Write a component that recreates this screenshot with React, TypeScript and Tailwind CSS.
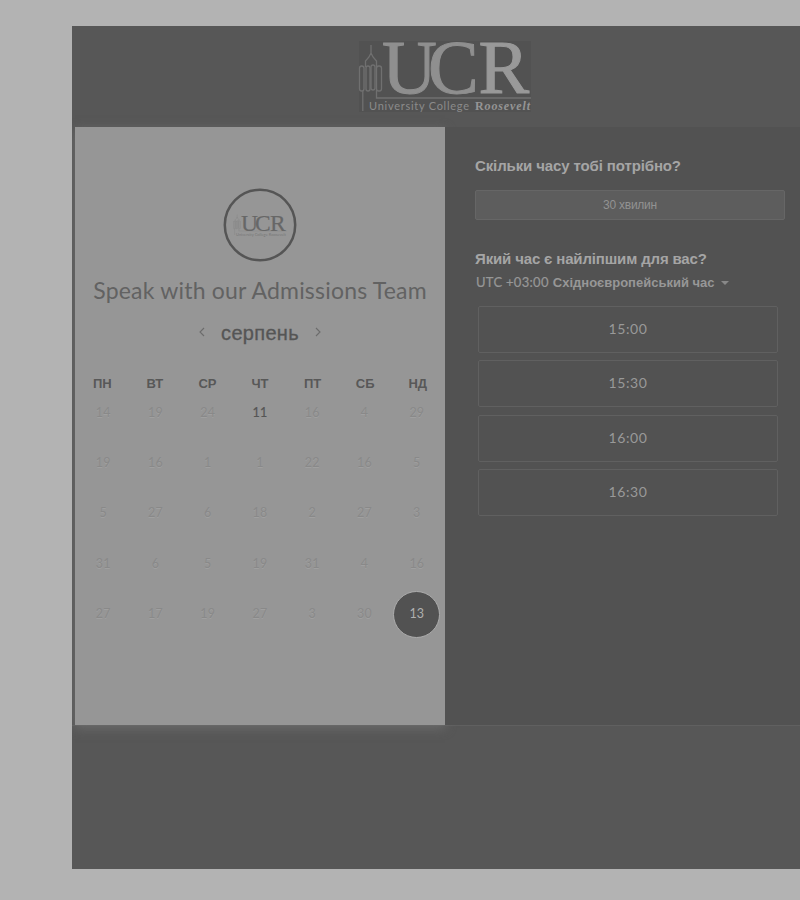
import React from "react";

const days = ["ПН", "ВТ", "СР", "ЧТ", "ПТ", "СБ", "НД"];
const weeks = [
  [14, 19, 24, 11, 16, 4, 29],
  [19, 16, 1, 1, 22, 16, 5],
  [5, 27, 6, 18, 2, 27, 3],
  [31, 6, 5, 19, 31, 4, 16],
  [27, 17, 19, 27, 3, 30, 13],
];
const slots = ["15:00", "15:30", "16:00", "16:30"];

function Towers() {
  return (
    <g fill="none" stroke="currentColor" strokeWidth="1.3">
      <path d="M31 5V15M31 13L29 17L25.500 21V27M31 13L33 17L36.500 21V27" />
      <rect x="19.500" y="26" width="4.500" height="25" rx="2.200" />
      <rect x="26" y="26" width="4" height="25" rx="2" />
      <rect x="31" y="25" width="4" height="25" rx="2" />
      <rect x="36.500" y="26" width="5" height="25" rx="2.200" />
      <path d="M22.800 51V71M36.500 50V58H191" />
    </g>
  );
}

function HeaderLogo() {
  return (
    <svg className="block h-[76px] w-[192px] overflow-visible text-[#707070]" viewBox="0 0 192 76">
      <rect x="19" y="1" width="172" height="71" fill="#525252" />
      <Towers />
      <text x="42 88 138.500" y="53" fontSize="76" fill="#8f8f8f" stroke="#8f8f8f" strokeWidth="1" fontFamily="'Liberation Serif', serif">
        UC<tspan fill="#999" stroke="#999">R</tspan>
      </text>
      <text x="29" y="70" fontSize="11" textLength="100" fill="#8b8b8b" fontFamily="Lato, sans-serif">University College</text>
      <text x="135" y="70" fontSize="12" textLength="55" fill="#959595" fontFamily="'Liberation Serif', serif" fontWeight="bold">
        R<tspan fontStyle="italic">oosevelt</tspan>
      </text>
    </svg>
  );
}

function Badge() {
  return (
    <svg className="block h-[74px] w-[74px]" viewBox="0 0 74 74">
      <circle cx="37" cy="37" r="35.2" fill="none" stroke="#555" strokeWidth="2.5" />
      <g transform="translate(4.500 25) scale(.31)" className="text-[#858585]">
        <Towers />
      </g>
      <text x="18 32 47" y="42.500" fill="#676767" stroke="#676767" strokeWidth="0.2" fontFamily="'Liberation Serif', serif" fontSize="23.500">UCR</text>
      <text x="13" y="48" fontSize="4" textLength="50" fill="#777" fontFamily="Lato, sans-serif">University College Roosevelt</text>
    </svg>
  );
}

function Arrow({ right = false }: { right?: boolean }) {
  return (
    <svg className="h-[10px] w-[6px] -translate-y-px" viewBox="0 0 6 10" fill="none" stroke="#6c6c6c" strokeWidth="1.1">
      <path d={right ? "M1 1L5 5L1 9" : "M5 1L1 5L5 9"} />
    </svg>
  );
}

function dateClass(week: number, day: number) {
  if (week === 0 && day === 3) return "text-[#555] [-webkit-text-stroke:0.2px_#555]";
  if (week === 4 && day === 6) return "text-[#b0b0b0]";
  return "text-[#898989] [text-shadow:0_1px_0_#a0a0a0]";
}

function Calendar() {
  return (
    <section className="flex h-[598px] w-[370px] shrink-0 flex-col items-center bg-[#969696] shadow-[0_3px_10px_#6c6c6c]">
      <div className="mt-[61px]"><Badge /></div>
      <h1 className="mt-[13px] h-[30px] whitespace-nowrap font-[Lato,sans-serif] text-[23px] leading-[30px] tracking-[0.2px] text-[#626262]">
        Speak with our Admissions Team
      </h1>
      <div className="mt-[15px] flex h-[26px] items-center gap-[16px]">
        <Arrow />
        <span className="font-['Liberation_Sans',sans-serif] text-[20px] leading-[26px] tracking-[0.3px] text-[#555] [-webkit-text-stroke:0.3px_#555]">серпень</span>
        <Arrow right />
      </div>
      <div className="mt-[28px] grid w-[368px] grid-cols-7 text-center font-['Liberation_Sans',sans-serif] text-[13px] font-bold leading-[20px] text-[#585858]">
        {days.map((day) => <span key={day}>{day}</span>)}
      </div>
      <div className="mt-px grid w-[366px] grid-cols-7 text-center font-[Lato,sans-serif] text-[12.5px] tracking-[0.2px]">
        {weeks.flatMap((week, w) => week.map((date, d) => (
          <div key={`${w}-${d}`} className="flex h-[50.3px] justify-center pt-[7px]">
            <span className={`relative flex h-[22px] w-[30px] items-center justify-center ${dateClass(w, d)}`}>
              {w === 4 && d === 6 && <i className="absolute -left-[9px] -top-[12px] h-[47px] w-[47px] rounded-full border border-[#acacac] bg-[#525252]" />}
              <span className="relative">{date}</span>
            </span>
          </div>
        )))}
      </div>
    </section>
  );
}

function Times() {
  return (
    <section className="h-[598px] min-w-0 flex-1 bg-[#525252] pl-[30px] pt-[29px] font-['Liberation_Sans',sans-serif] text-[#a5a5a5]">
      <h2 className="whitespace-nowrap text-[15px] font-bold leading-[20px] tracking-[-0.12px]">Скільки часу тобі потрібно?</h2>
      <button className="mt-[14px] flex h-[30px] w-[310px] items-center justify-center rounded-[2px] border border-[#666] bg-[#5d5d5d] text-[12px] tracking-[-0.25px] text-[#929292]">30 хвилин</button>
      <h2 className="mt-[29px] whitespace-nowrap text-[15px] font-bold leading-[20px] tracking-[-0.15px]">Який час є найліпшим для вас?</h2>
      <div className="mt-[4px] flex h-[20px] items-center whitespace-nowrap text-[13px] text-[#979797]">
        <span className="ml-px font-[Lato,sans-serif] tracking-[0.3px] [-webkit-text-stroke:0.2px_#979797]">UTC +03:00</span>
        <b className="ml-[4px]">Східноєвропейський час</b>
        <i className="ml-[6px] h-0 w-0 border-x-[4px] border-t-[4px] border-x-transparent border-t-[#888]" />
      </div>
      <div className="ml-[3px] mt-[13px] flex w-[300px] flex-col gap-[7.3px]">
        {slots.map((slot) => (
          <button key={slot} className="flex h-[47px] items-center justify-center rounded-[2px] border border-[#606060] pb-[2px] font-[Lato,sans-serif] text-[14px] tracking-[0.6px] text-[#999]">{slot}</button>
        ))}
      </div>
    </section>
  );
}

export default function App() {
  return (
    <div className="h-[900px] w-[800px] overflow-hidden bg-[#b3b3b3] pl-[72px] pt-[26px]">
      <main className="h-[843px] w-[728px] overflow-hidden bg-[#575757]">
        <header className="h-[101px] pl-[268px] pt-[14px]"><HeaderLogo /></header>
        <div className="flex border-b border-[#606060] pl-[3px]">
          <Calendar />
          <Times />
        </div>
      </main>
    </div>
  );
}
